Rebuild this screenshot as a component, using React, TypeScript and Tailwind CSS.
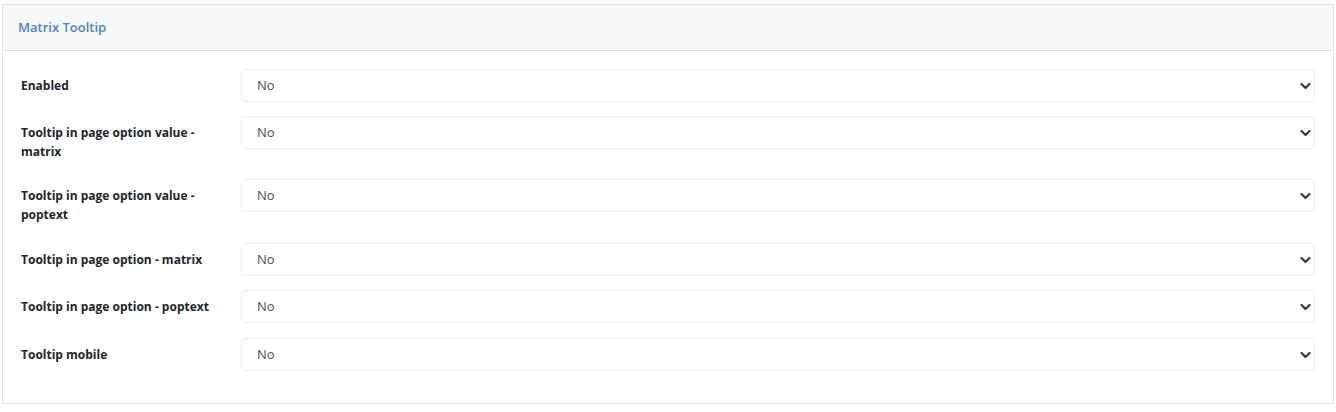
const rows = [
  { label: "Enabled" },
  { label: "Tooltip in page option value - matrix" },
  { label: "Tooltip in page option value - poptext" },
  { label: "Tooltip in page option - matrix" },
  { label: "Tooltip in page option - poptext" },
  { label: "Tooltip mobile" },
];

const Chevron = () => (
  <svg width="11" height="8" viewBox="0 0 11 8" className="text-[#343a40]">
    <path d="M1.5 2 L5.5 6 L9.5 2" fill="none" stroke="currentColor" strokeWidth="2.2" strokeLinecap="round" strokeLinejoin="round" />
  </svg>
);

const SelectRow = ({ label }: { label: string }) => (
  <div className="flex items-start mb-[14px]">
    <div className="w-[238px] shrink-0 pl-[18px] pr-[20px] pt-[7px] pb-[4px] text-[12px] leading-[19px] font-bold text-[#212529]">
      {label}
    </div>
    <div className="flex-1 h-[33px] flex items-center justify-between border border-[#eceef1] rounded-[4px] bg-white pl-[15px] pr-[3px]">
      <span className="text-[13px] text-[#495057]">No</span>
      <Chevron />
    </div>
  </div>
);

export default function App() {
  return (
    <div className="pt-[4px] px-[2px] bg-white min-h-[412px]" style={{ fontFamily: '"Open Sans", "Noto Sans", sans-serif' }}>
      <div className="border border-[#dee2e6] bg-white">
        <div className="h-[46px] bg-[#f7f8fa] border-b border-[#dee2e6] flex items-center px-[15px]">
          <span className="text-[13px] font-semibold text-[#4f84c4]">Matrix Tooltip</span>
        </div>
        <div className="pt-[18px] pb-[18px] pr-[18px] [&>div:nth-child(3)]:mb-[15px] [&>div:nth-child(5)]:mb-[15px]">
          {rows.map((r) => (
            <SelectRow key={r.label} label={r.label} />
          ))}
        </div>
      </div>
    </div>
  );
}
